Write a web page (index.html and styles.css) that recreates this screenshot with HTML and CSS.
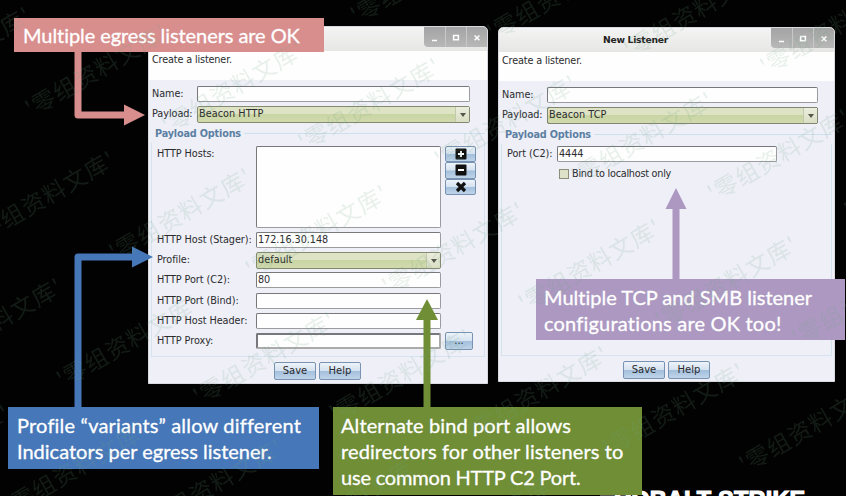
FILE: index.html
```
<!DOCTYPE html>
<html lang="en">
<head>
<meta charset="utf-8">
<title>Listeners</title>
<link rel="stylesheet" href="styles.css">
</head>
<body>
<main class="slide">
  <section class="window window-http">
    <header class="titlebar"><span class="title"></span>
      <div class="controls">
        <svg viewBox="0 0 21 20"><path d="M8 13.500h5"/></svg>
        <svg viewBox="0 0 21 20"><path d="M8 8.500h5v4.500h-5z"/></svg>
        <svg viewBox="0 0 21 20"><path d="M8 8.500l5 5M13 8.500l-5 5"/></svg>
      </div>
    </header>
    <p class="intro">Create a listener.</p>
    <div class="body">
      <div class="row top"><label>Name:</label><span class="field"></span></div>
      <div class="row top"><label>Payload:</label><span class="field select">Beacon HTTP<i></i></span></div>
      <div class="legend"><b>Payload Options</b></div>
      <div class="group">
        <div class="row hosts"><label>HTTP Hosts:</label><span class="field"></span>
          <div class="side">
            <button><svg viewBox="0 0 12 12"><rect x=".5" y=".5" width="11" height="11" rx="1" fill="#111"/><path d="M6 3v6M3 6h6" stroke="#fff" stroke-width="1.800"/></svg></button>
            <button><svg viewBox="0 0 12 12"><rect x=".5" y=".5" width="11" height="11" rx="1" fill="#111"/><path d="M3 6h6" stroke="#fff" stroke-width="1.800"/></svg></button>
            <button><svg viewBox="0 0 12 12"><path d="M2 2l8 8M10 2l-8 8" stroke="#111" stroke-width="3.200"/></svg></button>
          </div>
        </div>
        <div class="row"><label>HTTP Host (Stager):</label><span class="field">172.16.30.148</span></div>
        <div class="row"><label>Profile:</label><span class="field select">default<i></i></span></div>
        <div class="row"><label>HTTP Port (C2):</label><span class="field">80</span></div>
        <div class="row"><label>HTTP Port (Bind):</label><span class="field"></span></div>
        <div class="row"><label>HTTP Host Header:</label><span class="field"></span></div>
        <div class="row"><label>HTTP Proxy:</label><span class="field proxy"></span><button class="more">...</button></div>
      </div>
      <footer class="actions"><button>Save</button><button>Help</button></footer>
    </div>
  </section>

  <section class="window window-tcp">
    <header class="titlebar"><span class="title">New Listener</span>
      <div class="controls">
        <svg viewBox="0 0 21 20"><path d="M8 13.500h5"/></svg>
        <svg viewBox="0 0 21 20"><path d="M8 8.500h5v4.500h-5z"/></svg>
        <svg viewBox="0 0 21 20"><path d="M8 8.500l5 5M13 8.500l-5 5"/></svg>
      </div>
    </header>
    <p class="intro">Create a listener.</p>
    <div class="body">
      <div class="row top"><label>Name:</label><span class="field"></span></div>
      <div class="row top"><label>Payload:</label><span class="field select focused">Beacon TCP<i></i></span></div>
      <div class="legend"><b>Payload Options</b></div>
      <div class="group">
        <div class="row port"><label>Port (C2):</label><span class="field">4444</span></div>
        <div class="check"><span class="box"></span>Bind to localhost only</div>
      </div>
      <footer class="actions"><button>Save</button><button>Help</button></footer>
    </div>
  </section>

  <svg class="overlay" viewBox="0 0 846 496">
    <path d="M78 50V115H126" fill="none" stroke="#d98e8e" stroke-width="7" stroke-linejoin="round"/>
    <path d="M124 104.500L145 115L124 125.500z" fill="#d98e8e"/>
    <path d="M78 410V257H134" fill="none" stroke="#4677b8" stroke-width="7" stroke-linejoin="round"/>
    <path d="M132 246.500L153 257L132 267.500z" fill="#4677b8"/>
    <path d="M427 410V317" stroke="#6f8e36" stroke-width="7"/>
    <path d="M416 320L427 299L438 320z" fill="#6f8e36"/>
    <path d="M676 282V206" stroke="#ac98c1" stroke-width="7"/>
    <path d="M665.500 209L676 188L686.500 209z" fill="#ac98c1"/>
    <path d="M600 493h31v3h-31z" fill="#555"/>
  </svg>

  <p class="brand">COBALT STRIKE</p>
  <p class="callout red"><span>Multiple egress listeners are OK</span></p>
  <p class="callout purple"><span>Multiple TCP and SMB listener</span><span class="loose">configurations are OK too!</span></p>
  <p class="callout blue"><span class="loose">Profile “variants” allow different</span><span>Indicators per egress listener.</span></p>
  <p class="callout green"><span>Alternate bind port allows</span><span>redirectors for other listeners to</span><span class="tight">use common HTTP C2 Port.</span></p>

  <svg class="overlay watermark" viewBox="0 0 846 496">
    <defs>
      <text id="mark" transform="rotate(-30)" x="0" y="9" textLength="159">'零组资料文库'</text>
      <g id="line">
        <use href="#mark" x="-273" y="-34"/><use href="#mark" x="-136.500" y="-17"/><use href="#mark"/>
        <use href="#mark" x="136.500" y="17"/><use href="#mark" x="273" y="34"/><use href="#mark" x="409.500" y="51"/>
        <use href="#mark" x="546" y="68"/><use href="#mark" x="682.500" y="85"/><use href="#mark" x="819" y="102"/>
        <use href="#mark" x="955.500" y="119"/>
      </g>
    </defs>
    <use href="#line" x="79.500" y="-17"/>
    <use href="#line" x="27" y="110"/>
    <use href="#line" x="-25.500" y="237"/>
    <use href="#line" x="-78" y="364"/>
    <use href="#line" x="-130.500" y="491"/>
  </svg>
</main>
</body>
</html>
```
FILE: styles.css
```
* { box-sizing: border-box; }
body { margin: 0; background: #000; }
p { margin: 0; }
.slide { position: relative; width: 846px; height: 496px; overflow: hidden; background: #020202; font: 9.7px/12px "DejaVu Sans", sans-serif; letter-spacing: -.06px; color: #2b2b2d; }
.window { position: absolute; display: flex; flex-direction: column; background: #eeeff7; border: 1px solid #d9dae0; border-radius: 5px 5px 0 0; overflow: hidden; }
.window-http { left: 148px; top: 26px; width: 340px; height: 358px; }
.window-tcp { left: 498px; top: 27px; width: 337px; height: 355px; }
.titlebar { position: relative; height: 24px; flex: none; display: flex; background: linear-gradient(#f4f4f4, #e6e6e5); }
.title { width: 273px; text-align: center; font-size: 9.2px; letter-spacing: -.25px; font-weight: bold; line-height: 24px; color: #222; }
.controls { position: absolute; right: 0; top: 0; display: flex; width: 63px; height: 20px; background: linear-gradient(#a3a3a3, #b8b8b8); border-radius: 0 0 0 4px; }
.controls svg { width: 21px; height: 20px; fill: none; stroke: #fff; stroke-width: 1.6; border-left: 1px solid #c8c8c8; }
.controls svg:first-child { border: 0; }
.intro { height: 29px; flex: none; padding: 3px; background: #fefefe; letter-spacing: -.15px; }
.body { display: flex; flex-direction: column; flex: 1; padding-top: 4px; }
.row { display: flex; align-items: center; height: 20.3px; flex: none; }
.row label { flex: none; white-space: nowrap; }
.top { padding-left: 3px; }
.top label { width: 45px; }
.field { position: relative; display: block; height: 16px; padding: 0 1px; border: 1px solid #9b9ba0; border-top-color: #77777c; border-left-color: #77777c; border-radius: 2px; background: #fefefe; line-height: 14px; white-space: nowrap; }
.top .field { width: 273px; }
.window-tcp .top .field { width: 271px; }
.select { height: 17px; background: linear-gradient(#dde3c4 0 48%, #cad5a4 50%, #d0daae); border-color: #85896f; letter-spacing: .05px; }
.focused { outline: 1px solid #83866f; outline-offset: -1px; border-color: #696c5b; }
.select i { position: absolute; right: 0; top: 0; width: 14px; height: 15px; border-left: 1px solid #c3c9ac; background: linear-gradient(#ebedde, #d9dec3); }
.select i::after { content: ""; position: absolute; left: 4px; top: 6px; border: 3px solid transparent; border-top: 4px solid #55574b; border-bottom: 0; }
.legend { display: flex; align-items: center; flex: none; height: 18px; padding: 0 2px 0 6px; color: #5c7fa3; letter-spacing: -.18px; }
.legend::after { content: ""; flex: 1; height: 1px; margin-left: 3px; background: #cde0ee; }
.group { flex: none; height: 214px; margin: 0 2px; padding-left: 5px; border: 1px solid #d4e3ee; border-top: 0; }
.window-http .group label { width: 99px; }
.window-http .group .field { width: 185px; }
.group .hosts { height: 87px; align-items: flex-start; }
.hosts label { padding-top: 5px; }
.window-http .hosts .field { height: 82px; margin-top: 3px; }
.side { margin: 3px 0 0 4px; display: flex; flex-direction: column; }
button { height: 17px; padding: 0; border: 1px solid #7893b1; border-radius: 2px; font: 10px/14px "DejaVu Sans", sans-serif; color: #2b2b2d; background: linear-gradient(#edf3fa, #d5e2ef 48%, #a3bfdc 52%, #bfd4e9); }
.side button { width: 31px; height: 16.500px; display: grid; place-items: center; }
.side svg { width: 12px; height: 12px; }
.window-http .group .proxy { border: 2px solid #77777d; border-right-color: #aaa; border-bottom-color: #aaa; }
.more { width: 28px; height: 18px; margin-left: 4px; }
.actions { display: flex; justify-content: center; gap: 3px; padding-top: 5px; }
.actions button { width: 42px; height: 18px; }
.window-http .actions { padding-right: 1px; }
.window-tcp .group { height: 212px; }
.port { height: 20px; }
.port label { width: 50px; }
.port .field { width: 220px; }
.check { display: flex; align-items: center; gap: 3px; height: 20px; padding-left: 52px; letter-spacing: -.25px; }
.box { width: 10px; height: 10px; border: 1px solid #8b8e79; background: #dde2c8; }
.overlay { position: absolute; left: 0; top: 0; width: 846px; height: 496px; }
.callout { position: absolute; display: flex; flex-direction: column; align-items: flex-start; font: 20px/26px Lato, sans-serif; letter-spacing: 0; color: #fff; white-space: nowrap; font-variant-ligatures: none; -webkit-text-stroke: .3px #fff; }
.loose { letter-spacing: .2px; }
.tight { letter-spacing: -.2px; }
.red { left: 14px; top: 18px; width: 310px; height: 34px; padding: 4px 9px; background: #d98e8e; letter-spacing: -.07px; }
.purple { left: 536px; top: 279px; width: 309px; height: 61px; padding: 5px 8px; background: #ac98c1; }
.blue { left: 8px; top: 407px; width: 311px; height: 62px; padding: 5px 9px; background: #4677b8; }
.green { left: 333px; top: 407px; width: 309px; height: 88px; padding: 5px 8px; background: #6f8e36; letter-spacing: .1px; }
.brand { position: absolute; left: 614px; top: 485px; font: bold 23.5px/30px "Liberation Sans", sans-serif; letter-spacing: .2px; color: #fff; -webkit-text-stroke: 1.2px #fff; white-space: nowrap; }
.watermark text { font: 23px "Noto Sans CJK SC", sans-serif; letter-spacing: 0; }
.watermark { fill: #74a884; opacity: .16; }
```
